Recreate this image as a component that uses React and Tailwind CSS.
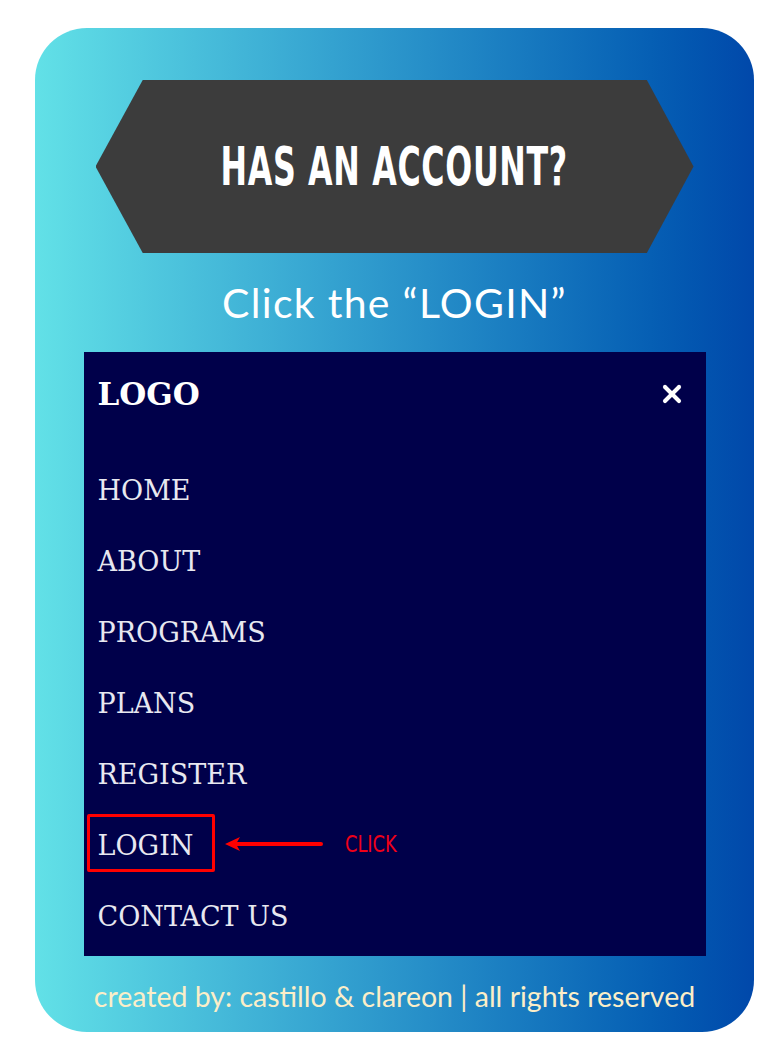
import { X } from "lucide-react";

const ITEMS = ["HOME", "ABOUT", "PROGRAMS", "PLANS", "REGISTER", "LOGIN", "CONTACT US"];

function NavItem({ label }) {
  const isLogin = label === "LOGIN";
  return (
    <li className="relative h-[71px] flex items-center pl-[14px] text-[27px] leading-none text-[#e8e8f0] font-['DejaVu_Serif',serif]">
      <span>{label}</span>
      {isLogin && (
        <>
          <div className="absolute left-[3px] top-[4px] w-[128px] h-[58px] border-[3px] border-[#ff0000] rounded-[2px]" />
          <svg className="absolute left-[140px] top-[26px]" width="100" height="16" viewBox="0 0 100 16">
            <line x1="12" y1="8" x2="97" y2="8" stroke="#ff0000" strokeWidth="4" strokeLinecap="round" />
            <polygon points="1,8 16,1 12,8 16,15" fill="#ff0000" />
          </svg>
          <span className="absolute left-[261px] top-[23px] origin-left scale-x-[0.86] text-[23px] leading-none text-[#f00018] font-['DejaVu_Sans_Condensed',sans-serif]">
            CLICK
          </span>
        </>
      )}
    </li>
  );
}

export default function App() {
  return (
    <div className="w-[781px] h-[1064px] bg-white pt-[28px]">
      <div className="ml-[35px] w-[719px] h-[1004px] rounded-[52px] bg-linear-to-r from-[#62e1e7] to-[#0148aa] pt-[52px] flex flex-col items-center">
        <div className="w-[598px] h-[173px] bg-[#3c3c3c] [clip-path:polygon(7.9%_0,92.2%_0,100%_50%,92.2%_100%,7.9%_100%,0_50%)] flex items-center justify-center">
          <h1 className="text-white text-[53px] leading-none font-bold tracking-[1px] scale-x-[0.665] font-['DejaVu_Sans_Condensed',sans-serif] whitespace-nowrap">
            HAS AN ACCOUNT?
          </h1>
        </div>
        <p className="mt-[26px] h-[48px] text-white text-[41px] leading-[48px] tracking-[1.3px] font-normal font-['Lato',sans-serif]">
          Click the “LOGIN”
        </p>
        <nav className="mt-[25px] w-[622px] h-[604px] bg-[#00004a]">
          <div className="h-[84px] flex items-center justify-between pl-[14px] pr-[20px]">
            <span className="text-white text-[31px] leading-none font-bold font-['DejaVu_Serif',serif]">LOGO</span>
            <X size={28} strokeWidth={3.5} className="text-white" />
          </div>
          <ul className="mt-[19px]">
            {ITEMS.map((label) => (
              <NavItem key={label} label={label} />
            ))}
          </ul>
        </nav>
        <p className="mt-[26px] text-[28.5px] leading-none text-[#fbeec8] font-['Lato',sans-serif]">
          created by: castillo &amp; clareon | all rights reserved
        </p>
      </div>
    </div>
  );
}
